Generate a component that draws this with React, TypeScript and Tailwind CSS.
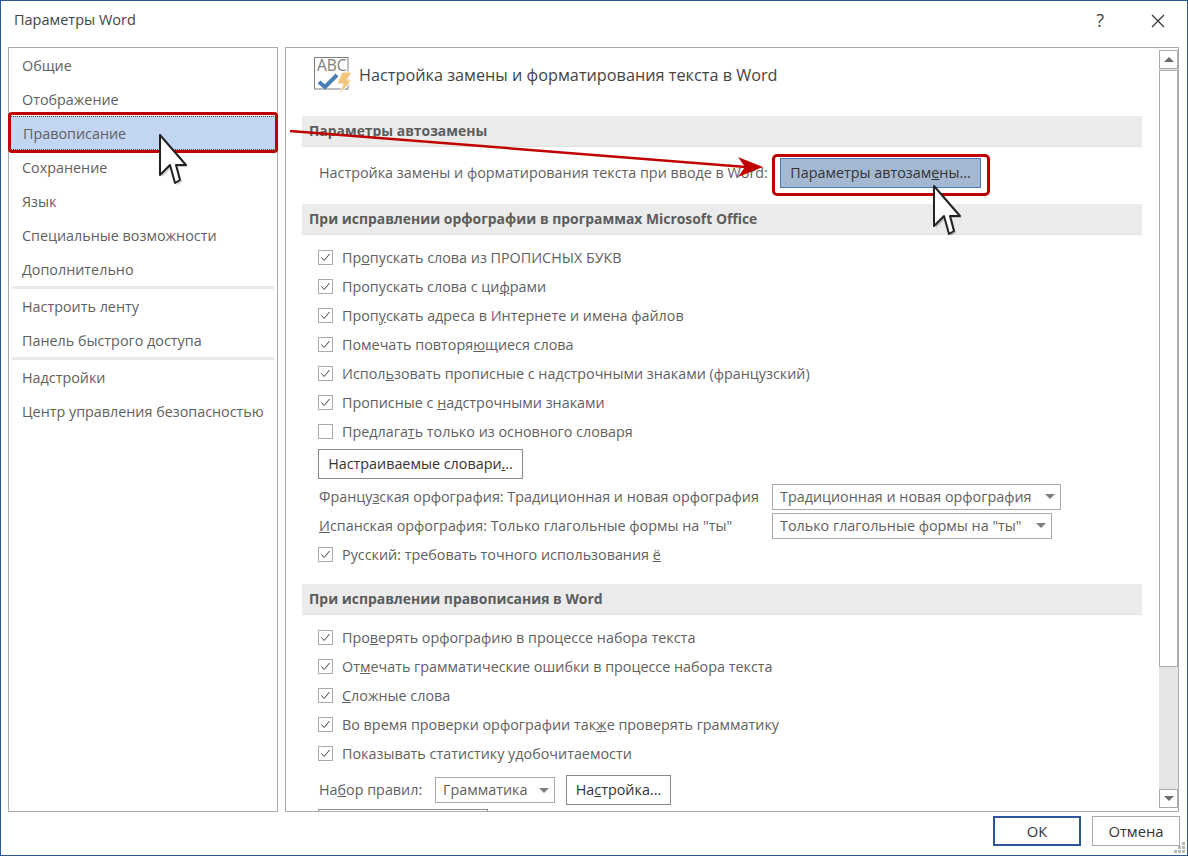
const font = "font-['Open_Sans','Noto_Sans',sans-serif]";

const leftTop = ["Общие", "Отображение", "Правописание", "Сохранение", "Язык", "Специальные возможности", "Дополнительно"];

const NavItem = ({ label, active }: { label: string; active?: boolean }) => (
  <div className={`flex h-[34px] items-center pl-[13px] pt-[2px] text-[14.35px] text-[#5f5f5f] ${active ? "bg-[#c2d5f2] outline-1 outline-dotted outline-[#444] -outline-offset-1" : ""}`}>
    {label}
  </div>
);

const Sep = () => <div className="mx-[3px] h-[3px] bg-[#e9e9e9]" />;

const SectionHead = ({ children }: { children: string }) => (
  <div className="flex h-[31px] items-center border-b border-[#e2e2e2] bg-[#ebebeb] pl-[7px] text-[13.9px] font-bold text-[#5c5c5c]">
    {children}
  </div>
);

const Check = ({ on = true, children }: { on?: boolean; children: React.ReactNode }) => (
  <div className="ml-4 flex h-[29px] items-center">
    <div className="flex h-[15px] w-[15px] items-center justify-center border border-[#ababab] bg-white">
      {on && (
        <svg width="11" height="11" viewBox="0 0 11 11" fill="none">
          <path d="M1.5 5.5 L4.2 8.5 L9.5 2" stroke="#444" strokeWidth="1" />
        </svg>
      )}
    </div>
    <span className="ml-[9px] text-[14.35px] text-[#5f5f5f]">{children}</span>
  </div>
);

const Btn = ({ children, className = "" }: { children: React.ReactNode; className?: string }) => (
  <div className={`flex items-center justify-center border border-[#8a8a8a] bg-white text-[14.35px] text-[#333] ${className}`}>{children}</div>
);

const Select = ({ children, className = "" }: { children: string; className?: string }) => (
  <div className={`flex h-[26px] items-center justify-between border border-[#ababab] bg-white pl-[7px] pr-[5px] text-[14.35px] text-[#5f5f5f] ${className}`}>
    <span>{children}</span>
    <span className="h-0 w-0 border-x-[5px] border-t-[5px] border-x-transparent border-t-[#7f7f7f]" />
  </div>
);

const Cursor = ({ className }: { className: string }) => (
  <svg className={`absolute ${className}`} width="34" height="58" viewBox="0 0 34 58" fill="none">
    <path d="M3 3 L3 43 L13 33 L18 51 L23 48 L19 33 L29 33 Z" fill="#000" fillOpacity="0.2" transform="translate(2 2)" />
    <path d="M3 3 L3 43 L13 33 L18 51 L23 48 L19 33 L29 33 Z" fill="#fff" stroke="#222" strokeWidth="2" strokeLinejoin="round" />
  </svg>
);

export default function App() {
  return (
    <div className={`relative flex h-[856px] w-[1188px] flex-col overflow-hidden border border-[#2b579a] bg-white ${font}`}>
      <div className="flex h-[46px] shrink-0 items-start justify-between">
        <div className="ml-[13px] mt-[8px] text-[14.5px] text-[#444]">Параметры Word</div>
        <div className="flex items-center">
          <span className="mr-[46px] mt-[6px] text-[18px] text-[#444]">?</span>
          <svg className="mr-[21px] mt-[6px]" width="16" height="16" viewBox="0 0 16 16" fill="none">
            <path d="M2 2 L14 14 M14 2 L2 14" stroke="#333" strokeWidth="1.2" />
          </svg>
        </div>
      </div>

      <div className="flex h-[765px] shrink-0">
        <div className="ml-[7px] h-full w-[270px] border border-[#ababab]">
          {leftTop.map((l, i) => (
            <div key={l} className={i === 2 ? "mx-px" : ""}>
              <NavItem label={l} active={i === 2} />
            </div>
          ))}
          <Sep />
          <NavItem label="Настроить ленту" />
          <NavItem label="Панель быстрого доступа" />
          <Sep />
          <NavItem label="Надстройки" />
          <NavItem label="Центр управления безопасностью" />
        </div>

        <div className="ml-[7px] flex h-full w-[894px] overflow-hidden border border-[#ababab]">
          <div className="w-[873px] shrink-0 overflow-hidden pl-4 pr-[17px]">
            <div className="flex h-[68px] items-start pl-3 pt-[5px]">
              <svg width="40" height="43" viewBox="0 -3 40 43" fill="none">
                <rect x="0.5" y="1.5" width="33.5" height="31.5" fill="#fff" stroke="#7d7d7d" />
                <text x="3" y="15" fontSize="15.5" fill="#7d7d7d" fontFamily="Open Sans">ABC</text>
                <path d="M5 26 L11 31 L23 19" stroke="#4a7fb5" strokeWidth="4" />
                <path d="M28 16 L38 16 L33 24 L38 24 L25 39 L29 28 L23 28 Z" fill="#f2c57c" stroke="#fff" strokeWidth="1" />
              </svg>
              <span className="ml-[5px] mt-[10px] text-[16.25px] text-[#444]">Настройка замены и форматирования текста в Word</span>
            </div>
            <SectionHead>Параметры автозамены</SectionHead>
            <div className="flex h-[57px] items-center pb-[5px] pl-[17px] text-[14.35px] text-[#5f5f5f]">
              <span className="w-[461px]">Настройка замены и форматирования текста при вводе в Word:</span>
              <div className="flex h-[30px] w-[201px] items-center justify-center border border-[#4a7ab8] bg-[#a5b8d1] text-[#333]">
                <span>Параметры автозам<u>е</u>ны...</span>
              </div>
            </div>
            <SectionHead>При исправлении орфографии в программах Microsoft Office</SectionHead>
            <div className="h-[8px]" />
            <Check>Пр<u>о</u>пускать слова из ПРОПИСНЫХ БУКВ</Check>
            <Check>Пропускать слова с ци<u>ф</u>рами</Check>
            <Check>Проп<u>у</u>скать адреса в Интернете и имена файлов</Check>
            <Check>Помечать повторя<u>ю</u>щиеся слова</Check>
            <Check>Испол<u>ь</u>зовать прописные с надстрочными знаками (французский)</Check>
            <Check>Прописные с <u>н</u>адстрочными знаками</Check>
            <Check on={false}>Предлага<u>т</u>ь только из основного словаря</Check>
            <Btn className="mb-[3px] ml-4 mt-[3px] h-[30px] w-[205px]"><span>Настраиваемые словари<u>.</u>..</span></Btn>
            <div className="flex h-[29px] items-center pl-[17px] text-[14.35px] text-[#5f5f5f]">
              <span className="w-[453px]">Францу<u>з</u>ская орфография: Традиционная и новая орфография</span>
              <Select className="w-[289px]">Традиционная и новая орфография</Select>
            </div>
            <div className="flex h-[29px] items-center pl-[17px] text-[14.35px] text-[#5f5f5f]">
              <span className="w-[453px]"><u>И</u>спанская орфография: Только глагольные формы на "ты"</span>
              <Select className="w-[280px]">Только глагольные формы на "ты"</Select>
            </div>
            <Check>Русский: требовать точного использования <u>ё</u></Check>
            <div className="h-[15px]" />
            <SectionHead>При исправлении правописания в Word</SectionHead>
            <div className="h-[8px]" />
            <Check>Про<u>в</u>ерять орфографию в процессе набора текста</Check>
            <Check>От<u>м</u>ечать грамматические ошибки в процессе набора текста</Check>
            <Check><u>С</u>ложные слова</Check>
            <Check>Во время проверки орфографии так<u>ж</u>е проверять грамматику</Check>
            <Check>Показывать статистику у<u>д</u>обочитаемости</Check>
            <div className="flex h-[41px] items-center pl-[17px] pt-[3px] text-[14.35px] text-[#5f5f5f]">
              <span className="w-[116px]">На<u>б</u>ор правил:</span>
              <Select className="w-[120px]">Грамматика</Select>
              <Btn className="ml-[11px] h-[30px] w-[105px]"><span>На<u>с</u>тройка...</span></Btn>
            </div>
            <div className="ml-4 h-[20px] w-[170px] border border-[#8a8a8a]" />
          </div>

          <div className="mt-[2px] flex h-[758px] w-[19px] shrink-0 flex-col bg-[#e6e6e6]">
            <div className="flex h-[19px] items-center justify-center border border-[#ababab] bg-white">
              <span className="h-0 w-0 border-x-[5px] border-b-[5px] border-x-transparent border-b-[#6d6d6d]" />
            </div>
            <div className="mt-px h-[597px] border border-[#ababab] bg-white" />
            <div className="flex-1" />
            <div className="flex h-[19px] items-center justify-center border border-[#ababab] bg-white">
              <span className="h-0 w-0 border-x-[5px] border-t-[5px] border-x-transparent border-t-[#6d6d6d]" />
            </div>
          </div>
        </div>
      </div>

      <div className="flex flex-1 items-start justify-end gap-[11px] pr-[7px] pt-[4px]">
        <div className="flex h-[30px] w-[88px] items-center justify-center border-2 border-[#2b579a] text-[14.8px] text-[#333]">ОК</div>
        <div className="flex h-[30px] w-[88px] items-center justify-center border border-[#ababab] text-[14.8px] text-[#333]">Отмена</div>
      </div>

      {/* уголок изменения размера */}
      <svg className="absolute bottom-px right-px" width="12" height="12" viewBox="0 0 12 12" fill="#b8b8b8">
        <rect x="8" y="0" width="3" height="3" />
        <rect x="4" y="4" width="3" height="3" />
        <rect x="8" y="4" width="3" height="3" />
        <rect x="0" y="8" width="3" height="3" />
        <rect x="4" y="8" width="3" height="3" />
        <rect x="8" y="8" width="3" height="3" />
      </svg>

      {/* оверлеи: рамки, стрелка, курсоры */}
      <div className="absolute left-[7px] top-[111px] h-[41px] w-[270px] rounded-[4px] border-[3px] border-[#c00000]" />
      <div className="absolute left-[771px] top-[153px] h-[42px] w-[218px] rounded-[5px] border-[3px] border-[#c00000]" />
      <svg className="absolute left-[287px] top-[125px]" width="480" height="55" viewBox="0 0 480 55" fill="none">
        <path d="M2 5 L458 41" stroke="#c00000" strokeWidth="2.5" />
        <path d="M475 41 L450 51 L457 41 L450 31 Z" fill="#c00000" />
      </svg>
      <Cursor className="left-[156px] top-[131px]" />
      <Cursor className="left-[930px] top-[182px]" />
    </div>
  );
}
